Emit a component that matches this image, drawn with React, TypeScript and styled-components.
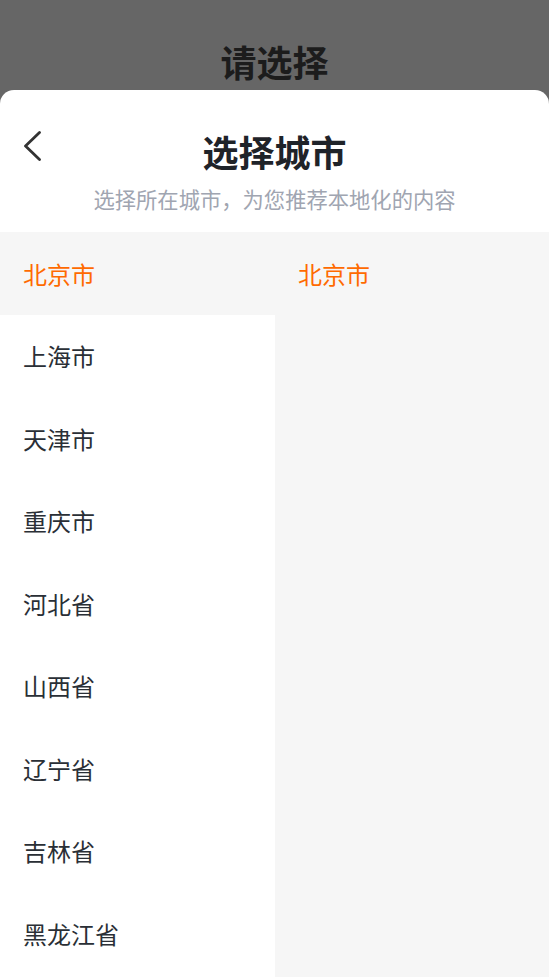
import React, {useState} from 'react';
import styled, {createGlobalStyle, css} from "styled-components";

const GlobalStyle = createGlobalStyle`
    html, body {
      margin: 0;
      padding: 0;
      height: 100%;
      overflow: hidden;
      font-family: "Noto Sans CJK SC", "Noto Sans", sans-serif;
    }
    #root {
      height: 100%;
    }
`

const Page = styled.div`
    height: 977px;
    background-color: #666666;
    display: flex;
    flex-direction: column;
    overflow: hidden;
`

const PageTitle = styled.div`
    height: 90px;
    flex-shrink: 0;
    display: flex;
    justify-content: center;
    align-items: center;
    padding-top: 32px;
    box-sizing: border-box;
    font-size: 36px;
    font-weight: 700;
    color: #1c1c1c;
`

const Sheet = styled.div`
    flex: 1;
    min-height: 0;
    background-color: #ffffff;
    border-radius: 14px 14px 0 0;
    display: flex;
    flex-direction: column;
    overflow: hidden;
`

const SheetHeader = styled.div`
    position: relative;
    height: 142px;
    flex-shrink: 0;
    display: flex;
    flex-direction: column;
    align-items: center;
`

const BackButton = styled.div`
    position: absolute;
    left: 20px;
    top: 40px;
    width: 24px;
    height: 32px;
    display: flex;
    align-items: center;
    justify-content: center;
`

const SheetTitle = styled.div`
    margin-top: 35px;
    font-size: 36px;
    line-height: 52px;
    font-weight: 700;
    color: #1f2329;
`

const SheetSubtitle = styled.div`
    margin-top: 7px;
    font-size: 21.3px;
    line-height: 30px;
    color: #a0a5b1;
`

const Columns = styled.div`
    flex: 1;
    min-height: 0;
    display: grid;
    grid-template-columns: 275px 1fr;
    background-color: #f6f6f6;
`

const Column = styled.div<{ tinted?: boolean }>`
    display: flex;
    flex-direction: column;
    overflow: hidden;
    background-color: ${({tinted}) => tinted ? '#f6f6f6' : '#ffffff'};
`

const Item = styled.div<{ active?: boolean }>`
    height: 82.5px;
    flex-shrink: 0;
    display: flex;
    align-items: center;
    padding-left: 23px;
    font-size: 24px;
    color: #2a2f36;
    ${({active}) => active ? css`
      background-color: #f6f6f6;
      color: #ff6a00;
    ` : null}
`

const provinces = ['北京市', '上海市', '天津市', '重庆市', '河北省', '山西省', '辽宁省', '吉林省', '黑龙江省']

const cities: { [k: string]: string[] } = {
    '北京市': ['北京市'],
    '上海市': ['上海市'],
    '天津市': ['天津市'],
    '重庆市': ['重庆市'],
}

export default function App() {
    const [selected, setSelected] = useState(0)
    const province = provinces[selected]
    const list = cities[province] || []
    return <>
        <GlobalStyle/>
        <Page>
            <PageTitle>请选择</PageTitle>
            <Sheet>
                <SheetHeader>
                    <BackButton>
                        <svg width="20" height="30" viewBox="0 0 20 30">
                            <path d="M17.5 1.5 L3.5 15 L17.5 28.5" fill="none" stroke="#333" strokeWidth="2.8"
                                  strokeLinecap="round" strokeLinejoin="round"/>
                        </svg>
                    </BackButton>
                    <SheetTitle>选择城市</SheetTitle>
                    <SheetSubtitle>选择所在城市，为您推荐本地化的内容</SheetSubtitle>
                </SheetHeader>
                <Columns>
                    <Column>
                        {provinces.map((p, i) =>
                            <Item key={i} active={i === selected} onClick={() => setSelected(i)}>{p}</Item>)}
                    </Column>
                    <Column tinted>
                        {list.map((c, i) => <Item key={i} active>{c}</Item>)}
                    </Column>
                </Columns>
            </Sheet>
        </Page>
    </>
}
